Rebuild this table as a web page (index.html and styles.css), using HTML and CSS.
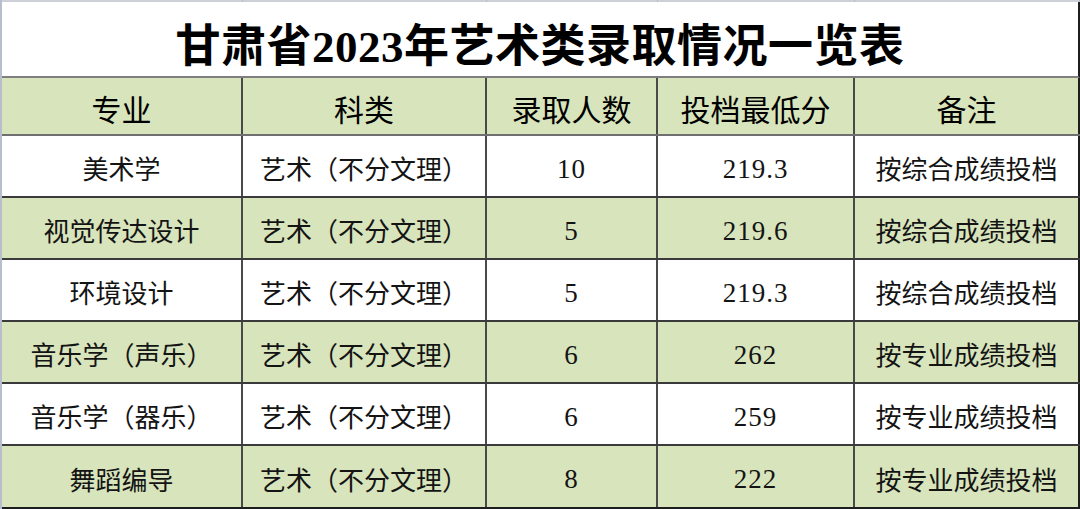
FILE: index.html
```html
<!DOCTYPE html>
<html lang="zh">
<head>
<meta charset="utf-8">
<title>甘肃省2023年艺术类录取情况一览表</title>
<link rel="stylesheet" href="styles.css">
</head>
<body>
<div class="sheet">
  <div class="strip"><span></span><span></span><span></span><span></span><span></span></div>
  <div class="title">甘肃省2023年艺术类录取情况一览表</div>
  <div class="row head">
    <div class="cell">专业</div>
    <div class="cell">科类</div>
    <div class="cell">录取人数</div>
    <div class="cell">投档最低分</div>
    <div class="cell">备注</div>
  </div>
  <div class="row">
    <div class="cell">美术学</div>
    <div class="cell">艺术（不分文理）</div>
    <div class="cell num">10</div>
    <div class="cell num">219.3</div>
    <div class="cell">按综合成绩投档</div>
  </div>
  <div class="row green">
    <div class="cell">视觉传达设计</div>
    <div class="cell">艺术（不分文理）</div>
    <div class="cell num">5</div>
    <div class="cell num">219.6</div>
    <div class="cell">按综合成绩投档</div>
  </div>
  <div class="row">
    <div class="cell">环境设计</div>
    <div class="cell">艺术（不分文理）</div>
    <div class="cell num">5</div>
    <div class="cell num">219.3</div>
    <div class="cell">按综合成绩投档</div>
  </div>
  <div class="row green">
    <div class="cell">音乐学（声乐）</div>
    <div class="cell">艺术（不分文理）</div>
    <div class="cell num">6</div>
    <div class="cell num">262</div>
    <div class="cell">按专业成绩投档</div>
  </div>
  <div class="row">
    <div class="cell">音乐学（器乐）</div>
    <div class="cell">艺术（不分文理）</div>
    <div class="cell num">6</div>
    <div class="cell num">259</div>
    <div class="cell">按专业成绩投档</div>
  </div>
  <div class="row green last">
    <div class="cell">舞蹈编导</div>
    <div class="cell">艺术（不分文理）</div>
    <div class="cell num">8</div>
    <div class="cell num">222</div>
    <div class="cell">按专业成绩投档</div>
  </div>
</div>
</body>
</html>
```
FILE: styles.css
```css
* { box-sizing: border-box; }
html, body { margin: 0; padding: 0; background: #ffffff; }
body {
  width: 1080px;
  height: 509px;
  overflow: hidden;
  font-family: "Liberation Serif", "Noto Sans CJK SC", serif;
  color: #141414;
}
.sheet {
  width: 1080px;
  border-left: 2px solid #b7bfce;
}
.strip {
  display: grid;
  grid-template-columns: 241px 244px 171px 197px 225px;
  height: 2px;
  background: #cdd0d6;
}
.strip span { border-right: 1px solid #b9bcc4; }
.title {
  height: 76px;
  border-right: 2px solid #1e1e1e;
  border-bottom: 2px solid #7f7f7f;
  display: flex;
  align-items: center;
  justify-content: center;
  padding-top: 6px;
  font-size: 45px;
  font-weight: 700;
  color: #000;
  letter-spacing: 0.5px;
}
.row {
  display: grid;
  grid-template-columns: 241px 244px 171px 197px 225px;
  height: 62px;
  border-bottom: 2px solid #3a3a3a;
  background: #ffffff;
}
.row.green, .row.head { background: #d8e4bc; }
.row.head {
  height: 58px;
  border-bottom: 2px solid #6f6f6f;
}
.row.last { height: 63px; border-bottom-color: #1e1e1e; }
.cell {
  display: flex;
  align-items: center;
  justify-content: center;
  padding-top: 3px;
  border-right: 2px solid #4a4a4a;
  font-size: 26px;
  white-space: nowrap;
}
.cell:last-child { border-right-color: #1e1e1e; }
.head .cell {
  font-size: 30px;
  font-weight: 400;
  color: #000000;
  padding-top: 4px;
}
.cell.num {
  font-size: 27px;
  letter-spacing: 1px;
  padding-top: 6px;
}
```
